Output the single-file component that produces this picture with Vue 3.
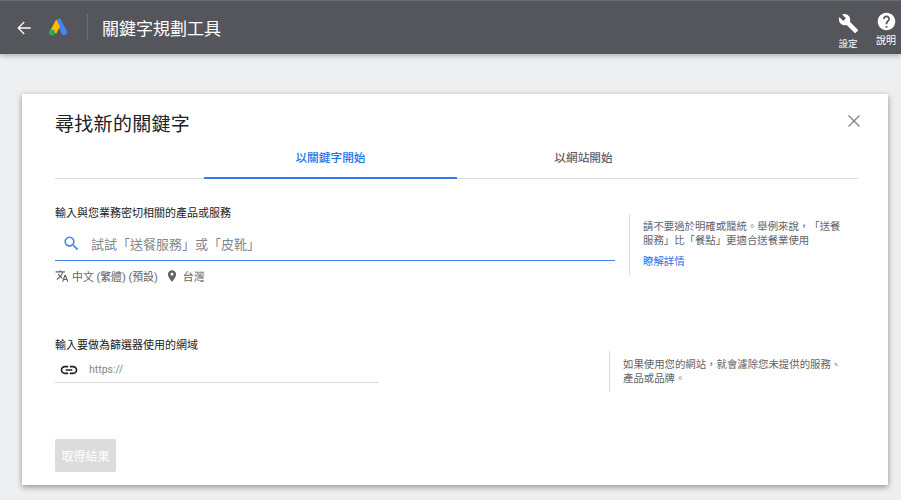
<template>
  <div class="page" lang="zh-TW">
    <header class="topbar">
      <svg class="back" viewBox="0 0 24 24" width="20" height="20"><path d="M20 11.200H7l5.800-5.800L11.700 4.300 4 12l7.700 7.700 1.100-1.100L7 12.800H20z" fill="#fff"/></svg>
      <svg class="logo" viewBox="0 0 20 18" width="20" height="18">
        <path d="M7.500 2.600 L11.400 .4 A2.400 2.400 0 0 1 12.700 1.200 L18.700 12.800 A2.900 2.900 0 0 1 13.600 15.600 Z" fill="#4285f4"/>
        <path d="M8.200 1.600 L12 8.600 L8.200 15.800 L2.200 12.400 Z" fill="#fbbc04"/>
        <circle cx="3.900" cy="14.400" r="3" fill="#34a853"/>
      </svg>
      <div class="divider"></div>
      <h1>關鍵字規劃工具</h1>
      <div class="actions">
        <div class="action action-settings">
          <svg viewBox="0 0 24 24" width="21" height="21"><path d="M22.700 19l-9.100-9.100c.9-2.300.4-5-1.500-6.900-2-2-5-2.400-7.400-1.300L9 6 6 9 1.600 4.700C.4 7.100.9 10.100 2.900 12.100c1.900 1.900 4.600 2.400 6.900 1.500l9.100 9.100c.4.400 1 .4 1.400 0l2.300-2.300c.5-.4.5-1.100.1-1.400z" fill="#fff"/></svg>
          <span>設定</span>
        </div>
        <div class="action action-help">
          <svg viewBox="0 0 24 24" width="21" height="21"><path d="M12 2C6.480 2 2 6.480 2 12s4.480 10 10 10 10-4.480 10-10S17.520 2 12 2zm1 17h-2v-2h2v2zm2.070-7.750l-.9.920C13.450 12.900 13 13.500 13 15h-2v-.5c0-1.100.45-2.100 1.170-2.830l1.240-1.260c.37-.36.590-.86.590-1.410 0-1.100-.9-2-2-2s-2 .9-2 2H8c0-2.210 1.790-4 4-4s4 1.790 4 4c0 .88-.36 1.680-.93 2.250z" fill="#fff"/></svg>
          <span>說明</span>
        </div>
      </div>
    </header>

    <main class="content">
      <section class="card">
        <div class="card-head">
          <h2>尋找新的關鍵字</h2>
          <svg class="close" viewBox="0 0 14 14" width="14" height="14"><path d="M1.500 1.500l11 11M12.500 1.500l-11 11" fill="none" stroke="#80868b" stroke-width="1.400"/></svg>
        </div>

        <div class="tabs">
          <div class="tab tab-active">以關鍵字開始</div>
          <div class="tab">以網站開始</div>
        </div>

        <div class="row row-keyword">
          <div class="field field-keyword">
            <label>輸入與您業務密切相關的產品或服務</label>
            <div class="input input-blue">
              <svg viewBox="0 0 24 24" width="19" height="19"><path d="M15.500 14h-.79l-.28-.27A6.470 6.470 0 0 0 16 9.500 6.500 6.500 0 1 0 9.500 16c1.610 0 3.090-.59 4.230-1.570l.27.28v.79l5 4.990L20.490 19l-4.990-5zm-6 0C7.010 14 5 11.990 5 9.500S7.010 5 9.500 5 14 7.010 14 9.500 11.990 14 9.500 14z" fill="#4285f4"/></svg>
              <span class="placeholder">試試「送餐服務」或「皮靴」</span>
            </div>
            <div class="meta">
              <svg viewBox="0 0 24 24" width="14" height="14"><path d="M12.870 15.070l-2.540-2.510.03-.03A17.520 17.520 0 0 0 14.070 6H17V4h-7V2H8v2H1v2h11.170C11.500 7.920 10.440 9.750 9 11.350 8.070 10.320 7.300 9.190 6.690 8h-2c.73 1.630 1.730 3.170 2.980 4.560l-5.090 5.020L4 19l5-5 3.110 3.110.76-2.040zM18.500 10h-2L12 22h2l1.120-3h4.750L21 22h2l-4.500-12zm-2.620 7l1.620-4.330L19.120 17h-3.240z" fill="#5f6368"/></svg>
              <span>中文 (繁體) (預設)</span>
              <svg class="pin" viewBox="0 0 24 24" width="14" height="14"><path d="M12 2C8.130 2 5 5.130 5 9c0 5.250 7 13 7 13s7-7.750 7-13c0-3.870-3.130-7-7-7zm0 9.500a2.500 2.500 0 1 1 0-5 2.500 2.500 0 0 1 0 5z" fill="#5f6368"/></svg>
              <span class="place">台灣</span>
            </div>
          </div>
          <aside class="hint hint-keyword">
            <p>請不要過於明確或籠統。舉例來說，「送餐服務」比「餐點」更適合送餐業使用</p>
            <a>瞭解詳情</a>
          </aside>
        </div>

        <div class="row row-domain">
          <div class="field field-domain">
            <label>輸入要做為篩選器使用的網域</label>
            <div class="input input-gray">
              <svg viewBox="0 0 24 24" width="20" height="20"><path d="M3.900 12c0-1.710 1.390-3.100 3.100-3.100h4V7H7c-2.760 0-5 2.240-5 5s2.240 5 5 5h4v-1.900H7c-1.710 0-3.100-1.390-3.100-3.100zM8 13h8v-2H8v2zm9-6h-4v1.900h4c1.710 0 3.100 1.390 3.100 3.100s-1.390 3.100-3.100 3.100h-4V17h4c2.760 0 5-2.240 5-5s-2.240-5-5-5z" fill="#202124"/></svg>
              <span class="placeholder">https://</span>
            </div>
          </div>
          <aside class="hint hint-domain">
            <p>如果使用您的網站，就會濾除您未提供的服務、產品或品牌。</p>
          </aside>
        </div>

        <button class="submit" disabled>取得結果</button>
      </section>
    </main>
  </div>
</template>

<script setup>
</script>

<style>
html, body {
  margin: 0;
  background: #eeeff1;
}
</style>

<style scoped>
.page {
  width: 901px;
  height: 500px;
  overflow: hidden;
  background: #eeeff1;
  font-family: Roboto, "Noto Sans CJK TC", sans-serif;
  text-spacing-trim: space-all;
  color: #3c4043;
}

.topbar {
  height: 54px;
  box-sizing: border-box;
  border-top: 1px solid #6b6d71;
  background: #54565b;
  box-shadow: 0 2px 5px rgba(0, 0, 0, 0.25);
  display: flex;
  align-items: center;
  padding-left: 14px;
  color: #fff;
}

.back {
  flex: none;
}

.logo {
  flex: none;
  margin: -1px 0 0 14px;
}

.divider {
  width: 1px;
  height: 27px;
  background: #6e7074;
  margin-left: 19px;
}

h1 {
  margin: 0 0 0 14px;
  font-size: 17px;
  font-weight: 400;
}

.actions {
  margin-left: auto;
  align-self: flex-start;
  display: flex;
  padding-right: 3px;
  gap: 14px;
}

.action {
  display: flex;
  flex-direction: column;
  align-items: center;
  font-size: 9.500px;
  line-height: 12px;
  width: 24px;
}

.action-settings {
  margin-top: 12px;
}

.action-settings span {
  margin-top: 4px;
}

.action-help {
  margin-top: 10px;
}

.action-help span {
  margin-top: 3px;
  font-size: 10px;
}

.content {
  padding: 40px 13px 0 22px;
}

.card {
  height: 391px;
  box-sizing: border-box;
  background: #fff;
  box-shadow: 0 2px 6px rgba(0, 0, 0, 0.4);
  padding: 0 30px 0 33px;
}

.card-head {
  height: 54px;
  position: relative;
}

h2 {
  margin: 0;
  padding-top: 20px;
  font-size: 19px;
  font-weight: 400;
  letter-spacing: 0.3px;
  line-height: 22px;
  color: #202124;
}

.close {
  position: absolute;
  right: -3px;
  top: 20px;
}

.tabs {
  display: flex;
  height: 30px;
  padding-left: 149px;
  border-bottom: 1px solid #dadce0;
  font-size: 11.700px;
  font-weight: 500;
  color: #5f6368;
}

.tab {
  width: 253px;
  height: 31px;
  line-height: 20px;
  text-align: center;
  box-sizing: border-box;
}

.tab-active {
  color: #1a73e8;
  border-bottom: 2px solid #3b78e7;
}

.row {
  display: flex;
  align-items: flex-start;
}

.row-keyword {
  margin-top: 28px;
}

.field label {
  display: block;
  font-size: 11px;
  line-height: 13px;
  color: #202124;
}

.field-keyword {
  width: 560px;
}

.input {
  display: flex;
  align-items: center;
  box-sizing: border-box;
}

.input-blue {
  height: 41px;
  border-bottom: 1px solid #4285f4;
  padding: 6px 0 0 7px;
  gap: 10px;
}

.input-blue .placeholder {
  font-size: 13px;
  color: #80868b;
}

.meta {
  display: flex;
  align-items: center;
  height: 30px;
  font-size: 10.900px;
  color: #5f6368;
  gap: 3px;
}

.pin {
  margin-left: 4px;
}

.place {
  margin-left: 1px;
}

.input-gray {
  width: 324px;
  height: 31px;
  border-bottom: 1px solid #dadce0;
  padding: 5px 0 0 4px;
  gap: 10px;
}

.input-gray .placeholder {
  font-size: 10.500px;
  color: #80868b;
}

.hint {
  border-left: 1px solid #dadce0;
  box-sizing: border-box;
  font-size: 10.400px;
  line-height: 14px;
  color: #5f6368;
}

.hint p {
  margin: 0;
}

.hint a {
  display: block;
  margin-top: 7px;
  color: #1a73e8;
}

.hint-keyword {
  margin: 7px 0 0 14px;
  width: 215px;
  height: 61px;
  padding: 6px 0 0 13px;
}

.row-domain {
  margin-top: 48px;
}

.field-domain {
  width: 540px;
}

.hint-domain {
  margin: 12px 0 0 14px;
  width: 236px;
  height: 41px;
  padding: 7px 0 0 13px;
}

.submit {
  display: block;
  margin-top: 47px;
  width: 61px;
  height: 33px;
  border: 0;
  border-radius: 2px;
  background: #dcdcdc;
  color: #fff;
  font: inherit;
  font-size: 12px;
  padding: 0;
}
</style>
